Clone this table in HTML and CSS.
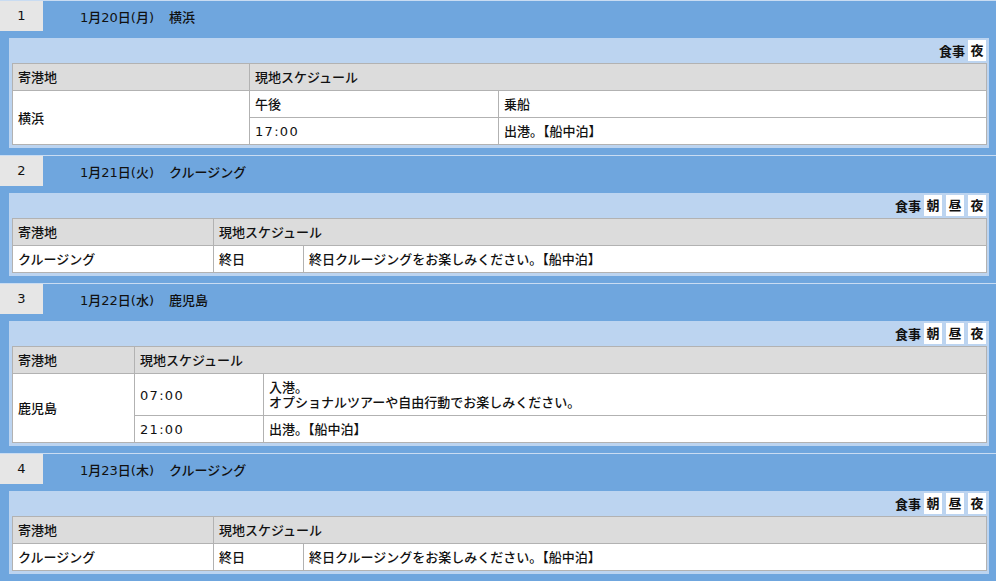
FILE: index.html
```html
<!DOCTYPE html>
<html lang="ja">
<head>
<meta charset="utf-8">
<title>スケジュール</title>
<link rel="stylesheet" href="styles.css">
</head>
<body>
<div class="schedule">

  <section class="day">
    <div class="day-head">
      <span class="day-no">1</span>
      <span class="day-date">1月20日(月)</span>
      <span class="day-place">横浜</span>
    </div>
    <div class="day-body">
      <div class="meals"><span class="meal-label">食事</span><span class="meal">夜</span></div>
      <table class="sched">
        <colgroup><col class="a1"><col class="a2"><col class="a3"></colgroup>
        <tr class="th"><td>寄港地</td><td colspan="2">現地スケジュール</td></tr>
        <tr><td rowspan="2">横浜</td><td>午後</td><td>乗船</td></tr>
        <tr><td class="time">17:00</td><td>出港。【船中泊】</td></tr>
      </table>
    </div>
  </section>

  <section class="day">
    <div class="day-head">
      <span class="day-no">2</span>
      <span class="day-date">1月21日(火)</span>
      <span class="day-place">クルージング</span>
    </div>
    <div class="day-body">
      <div class="meals"><span class="meal-label">食事</span><span class="meal">朝</span><span class="meal">昼</span><span class="meal">夜</span></div>
      <table class="sched">
        <colgroup><col class="b1"><col class="b2"><col class="b3"></colgroup>
        <tr class="th"><td>寄港地</td><td colspan="2">現地スケジュール</td></tr>
        <tr><td>クルージング</td><td>終日</td><td>終日クルージングをお楽しみください。【船中泊】</td></tr>
      </table>
    </div>
  </section>

  <section class="day">
    <div class="day-head">
      <span class="day-no">3</span>
      <span class="day-date">1月22日(水)</span>
      <span class="day-place">鹿児島</span>
    </div>
    <div class="day-body">
      <div class="meals"><span class="meal-label">食事</span><span class="meal">朝</span><span class="meal">昼</span><span class="meal">夜</span></div>
      <table class="sched">
        <colgroup><col class="c1"><col class="c2"><col class="c3"></colgroup>
        <tr class="th"><td>寄港地</td><td colspan="2">現地スケジュール</td></tr>
        <tr><td rowspan="2">鹿児島</td><td class="time">07:00</td><td>入港。<br>オプショナルツアーや自由行動でお楽しみください。</td></tr>
        <tr><td class="time">21:00</td><td>出港。【船中泊】</td></tr>
      </table>
    </div>
  </section>

  <section class="day">
    <div class="day-head">
      <span class="day-no">4</span>
      <span class="day-date">1月23日(木)</span>
      <span class="day-place">クルージング</span>
    </div>
    <div class="day-body">
      <div class="meals"><span class="meal-label">食事</span><span class="meal">朝</span><span class="meal">昼</span><span class="meal">夜</span></div>
      <table class="sched">
        <colgroup><col class="b1"><col class="b2"><col class="b3"></colgroup>
        <tr class="th"><td>寄港地</td><td colspan="2">現地スケジュール</td></tr>
        <tr><td>クルージング</td><td>終日</td><td>終日クルージングをお楽しみください。【船中泊】</td></tr>
      </table>
    </div>
  </section>

</div>
</body>
</html>
```

FILE: styles.css
```css
* { box-sizing: border-box; }

html, body {
  margin: 0;
  padding: 0;
  background: #ffffff;
}

body {
  font-family: "DejaVu Sans", "Noto Sans CJK JP", sans-serif;
  font-size: 13px;
  font-weight: 500;
  color: #111111;
}

.schedule {
  width: 996px;
}

.day {
  background: #6fa6de;
  border-top: 1px solid #c9dcf2;
  padding-bottom: 7px;
}

.day-head {
  display: flex;
  align-items: center;
  height: 30px;
}

.day-no {
  width: 43px;
  height: 30px;
  line-height: 30px;
  text-align: center;
  background: #e6e6e6;
}

.day-date {
  margin-left: 37px;
}

.day-place {
  margin-left: 15px;
}

.day-body {
  margin: 7px 7px 0 9px;
  background: #bcd4f0;
  padding: 0 3px 3px;
}

.meals {
  display: flex;
  justify-content: flex-end;
  align-items: center;
  gap: 4px;
  height: 25px;
  font-weight: bold;
}

.meal-label {
  margin-right: -1px;
}

.meal {
  display: inline-block;
  width: 18px;
  height: 21px;
  line-height: 21px;
  text-align: center;
  background: #ffffff;
}

.sched {
  width: 100%;
  table-layout: fixed;
  border-collapse: collapse;
  background: #ffffff;
}

.sched td {
  border: 1px solid #b2b2b2;
  padding: 6px 5px 5px;
  line-height: 15px;
  vertical-align: middle;
}

.sched .th td {
  background: #dcdcdc;
}

.sched .time {
  letter-spacing: 1.3px;
}

.a1 { width: 237px; }
.a2 { width: 249px; }
.a3 { width: 488px; }

.b1 { width: 201px; }
.b2 { width: 90px; }
.b3 { width: 683px; }

.c1 { width: 122px; }
.c2 { width: 129px; }
.c3 { width: 723px; }
```
